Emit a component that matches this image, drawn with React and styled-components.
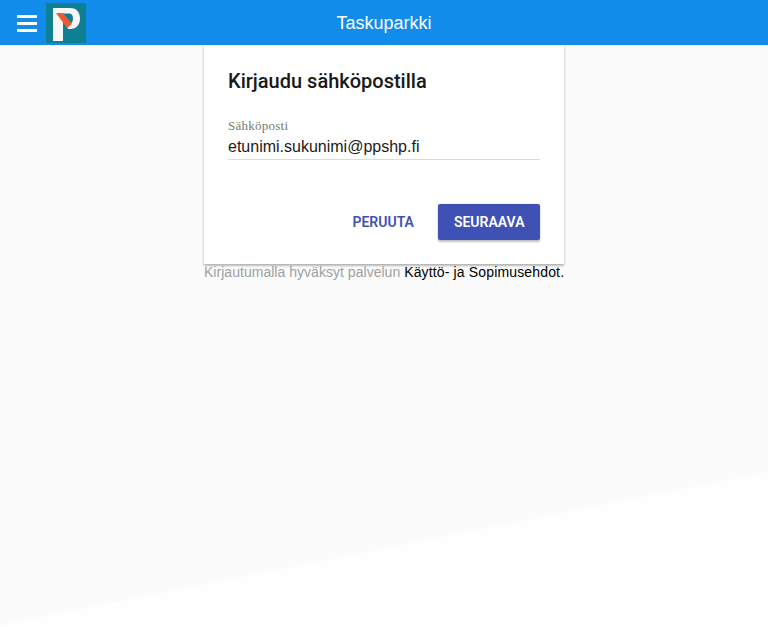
import React from "react";
import styled, { createGlobalStyle } from "styled-components";

const GlobalStyle = createGlobalStyle`
    html, body {
        margin: 0;
        padding: 0;
        height: 100%;
    }
    body {
        background: #fbfbfb;
        font-family: "Liberation Sans", Arial, sans-serif;
    }
    #root {
        height: 100%;
    }
`;

const Page = styled.div`
    min-height: 627px;
    height: 100%;
    position: relative;
    overflow: hidden;

    &::before {
        content: "";
        position: absolute;
        inset: 0;
        background: #fefefe;
        clip-path: polygon(100% 472px, 100% 100%, 0 100%, 0 625px);
    }
`;

const Header = styled.header`
    position: relative;
    z-index: 2;
    height: 45px;
    background: #118ceb;
    display: flex;
    align-items: center;
`;

const MenuButton = styled.button`
    width: 46px;
    height: 45px;
    padding: 1px 0 0 17px;
    border: 0;
    background: none;
    display: flex;
    flex-direction: column;
    justify-content: center;
    gap: 4px;
    flex-shrink: 0;

    span {
        display: block;
        width: 20px;
        height: 3px;
        background: #fff;
    }
`;

const Logo = styled.svg`
    width: 40px;
    height: 40px;
    margin-top: 1px;
    flex-shrink: 0;
    display: block;
`;

const Title = styled.h1`
    position: absolute;
    left: 0;
    right: 0;
    top: 0;
    margin: 0;
    text-align: center;
    line-height: 47px;
    color: #fff;
    font-size: 18px;
    font-weight: 400;
`;

const Main = styled.main`
    position: relative;
    z-index: 1;
    width: 360px;
    margin: 0 auto;
`;

const Card = styled.section`
    background: #fff;
    height: 219px;
    padding: 24px 24px 0;
    box-sizing: border-box;
    box-shadow: 0 2px 2px rgba(0, 0, 0, 0.24), 0 0 3px rgba(0, 0, 0, 0.14);
    display: flex;
    flex-direction: column;
`;

const Heading = styled.h2`
    margin: 0;
    font-family: Roboto, sans-serif;
    font-size: 20px;
    line-height: 24px;
    font-weight: 500;
    color: #191919;
`;

const Field = styled.div`
    margin-top: 26px;
    border-bottom: 1px solid #dcdcdc;
    height: 40px;
`;

const Label = styled.label`
    display: block;
    font-family: "Liberation Serif", serif;
    font-size: 13px;
    line-height: 14px;
    letter-spacing: 0.25px;
    color: #777;
`;

const Value = styled.div`
    font-size: 16px;
    line-height: 20px;
    margin-top: 4px;
    color: #1a1a1a;
`;

const Actions = styled.div`
    margin-top: 44px;
    display: flex;
    justify-content: flex-end;
    align-items: center;
    gap: 9px;
`;

const Button = styled.button`
    height: 36px;
    padding: 0 15.500px;
    border: 0;
    border-radius: 2px;
    font-family: Roboto, sans-serif;
    font-size: 14px;
    font-weight: 600;
    background: ${(props) => (props.$primary ? "#3f51b5" : "transparent")};
    color: ${(props) => (props.$primary ? "#fff" : "#3f51b5")};
    box-shadow: ${(props) =>
        props.$primary
            ? "0 2px 2px rgba(0, 0, 0, 0.24), 0 0 2px rgba(0, 0, 0, 0.12)"
            : "none"};
`;

const Terms = styled.p`
    margin: 0;
    font-size: 14px;
    line-height: 16px;
    letter-spacing: 0.03px;
    white-space: nowrap;
    color: #a0a0a0;

    a {
        color: #000;
        letter-spacing: 0.15px;
        text-decoration: none;
    }
`;

const App = () => {
    return (
        <Page>
            <GlobalStyle />
            <Header>
                <MenuButton aria-label="menu">
                    <span />
                    <span />
                    <span />
                </MenuButton>
                <Logo viewBox="0 0 40 40">
                    <rect width="40" height="40" fill="#0f7f94" />
                    <path
                        d="M7 5H24C31 5 34 10 34 15.500C34 21 31 26 24 26H22L20 21H23C26 21 27 18 27 15.500C27 13 26 10.500 23 10.500H17V38H7z"
                        fill="#f7f7f7"
                    />
                    <path d="M10 10H17L26 21L21 25z" fill="#ee5a36" />
                </Logo>
                <Title>Taskuparkki</Title>
            </Header>
            <Main>
                <Card>
                    <Heading>Kirjaudu sähköpostilla</Heading>
                    <Field>
                        <Label>Sähköposti</Label>
                        <Value>etunimi.sukunimi@ppshp.fi</Value>
                    </Field>
                    <Actions>
                        <Button>PERUUTA</Button>
                        <Button $primary>SEURAAVA</Button>
                    </Actions>
                </Card>
                <Terms>
                    Kirjautumalla hyväksyt palvelun{" "}
                    <a href="#terms">Käyttö- ja Sopimusehdot.</a>
                </Terms>
            </Main>
        </Page>
    );
};

export default App;
